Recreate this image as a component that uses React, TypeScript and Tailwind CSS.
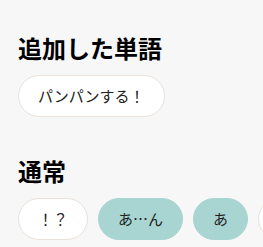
import React from "react";

const font = { fontFamily: '"Noto Sans CJK JP", "Noto Sans", sans-serif' };

function Pill({ label, active }: { label: string; active?: boolean }) {
  return (
    <button
      className={
        active
          ? "shrink-0 rounded-full border border-[#a8d5d2] bg-[#a8d5d2] px-[19px] py-[10px] text-[15px] leading-[20px] text-[#222]"
          : "shrink-0 rounded-full border border-[#e9e2da] bg-white px-[19px] py-[10px] text-[15px] leading-[20px] text-[#222]"
      }
    >
      {label}
    </button>
  );
}

export default function App() {
  return (
    <div className="min-h-screen w-full overflow-hidden bg-[#f7f7f7] pl-[18px] pt-[31px]" style={font}>
      <section>
        <h2 className="text-[24px] font-bold leading-[34px] text-black">追加した単語</h2>
        <div className="mt-[10px] flex gap-[10px]">
          <Pill label="パンパンする！" />
        </div>
      </section>
      <section className="mt-[37px]">
        <h2 className="text-[24px] font-bold leading-[34px] text-black">通常</h2>
        <div className="mt-[10px] flex gap-[10px]">
          <Pill label="！？" />
          <Pill label="あ…ん" active />
          <Pill label="あ" active />
          <Pill label="いく" />
          <Pill label="だめ" />
        </div>
      </section>
    </div>
  );
}
